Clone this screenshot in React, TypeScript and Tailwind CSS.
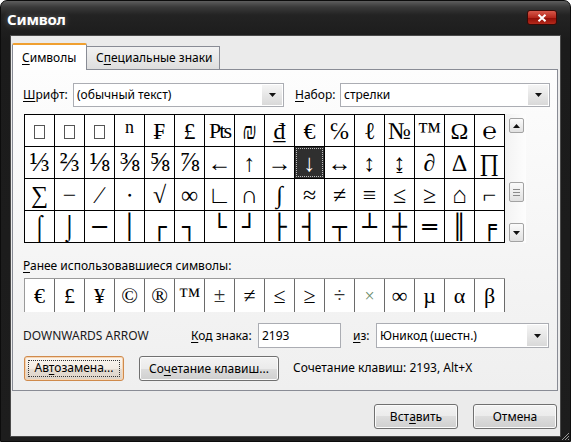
import React from "react";

const U = ({ c }: { c: string }) => (
  <span className="underline decoration-1 underline-offset-[2px]">{c}</span>
);

const rows: string[][] = [
  ["box", "box", "box", "ⁿ", "₣", "£", "Pts", "₪", "₫", "€", "℅", "ℓ", "№", "™", "Ω", "℮"],
  ["⅓", "⅔", "⅛", "⅜", "⅝", "⅞", "←", "↑", "→", "↓", "↔", "↕", "↨", "∂", "∆", "∏"],
  ["∑", "−", "∕", "∙", "√", "∞", "∟", "∩", "∫", "≈", "≠", "≡", "≤", "≥", "⌂", "⌐"],
  ["⌠", "⌡", "─", "│", "┌", "┐", "└", "┘", "├", "┤", "┬", "┴", "┼", "═", "║", "╒"],
];

const recent = ["€", "£", "¥", "©", "®", "™", "±", "≠", "≤", "≥", "÷", "×", "∞", "µ", "α", "β"];

function Cell({ s, sel }: { s: string; sel?: boolean }) {
  if (sel) {
    return (
      <div className="w-[30px] h-[32px] border-r border-b border-black bg-[#2f2f2f] p-[1px]">
        <div className="w-full h-full border border-dotted border-[#bdbdbd] flex items-center justify-center text-white text-[24px] leading-none font-['Liberation_Serif','DejaVu_Serif',serif]">
          {s}
        </div>
      </div>
    );
  }
  const code = s.charCodeAt(0);
  const box = code >= 0x2500 && code < 0x2580;
  const frac = code >= 0x2150 && code < 0x2160;
  return (
    <div className="w-[30px] h-[32px] border-r border-b border-black bg-white flex items-center justify-center text-black leading-none">
      {s === "box" ? (
        <div className="w-[11px] h-[14px] border border-[#555] mt-[3px]" />
      ) : s === "Pts" ? (
        <span className="text-[22px] tracking-[-2px] font-['Liberation_Serif',serif]">Pts</span>
      ) : s === "ⁿ" ? (
        <span className="text-[18px] font-['Liberation_Serif',serif] -mt-[8px]">n</span>
      ) : box ? (
        <span className="text-[24px] leading-none font-['DejaVu_Sans_Mono',monospace]">{s}</span>
      ) : frac ? (
        <span className="text-[27px] font-['Liberation_Serif','DejaVu_Serif',serif]">{s}</span>
      ) : (
        <span className="text-[24px] font-['Liberation_Serif','DejaVu_Serif',serif]">{s}</span>
      )}
    </div>
  );
}

function Tri() {
  return (
    <svg width="7" height="4" viewBox="0 0 7 4">
      <path d="M0 0H7L3.5 4Z" fill="#111" />
    </svg>
  );
}
function TriUp() {
  return (
    <svg width="7" height="4" viewBox="0 0 7 4">
      <path d="M0 4H7L3.5 0Z" fill="#111" />
    </svg>
  );
}

function Select({ w, text }: { w: string; text: string }) {
  return (
    <div className={`${w} h-[24px] border border-[#abadb3] bg-white flex items-stretch`}>
      <div className="flex-1 flex items-center pl-[3px] text-[12px] text-black">{text}</div>
      <div className="w-[20px] my-[1px] mr-[1px] bg-gradient-to-b from-[#f5f5f5] to-[#d9d9d9] flex items-center justify-center">
        <Tri />
      </div>
    </div>
  );
}

function Btn({ children, w, focus }: { children: React.ReactNode; w: string; focus?: boolean }) {
  if (focus) {
    return (
      <div className={`${w} h-[25px] rounded-[3px] border border-[#cf8a4c] bg-[linear-gradient(#fbf6f0_0%,#f2ebe3_50%,#e6ddd3_50%,#ddd3c8_100%)] shadow-[inset_0_0_0_1px_#f7d5b2] p-[3px]`}>
        <div className="w-full h-full border border-dotted border-[#333] flex items-center justify-center text-[12px] text-black">
          {children}
        </div>
      </div>
    );
  }
  return (
    <div className={`${w} h-[25px] rounded-[3px] border border-[#707070] bg-[linear-gradient(#f3f3f3_0%,#ebebeb_50%,#dddddd_50%,#cfcfcf_100%)] shadow-[inset_0_0_0_1px_#fbfbfb] flex items-center justify-center text-[12px] text-black`}>
      {children}
    </div>
  );
}

export default function App() {
  return (
    <div className="w-[571px] h-[442px] bg-white relative overflow-hidden font-['Noto_Sans','Open_Sans',sans-serif]">
      <div className="w-full h-full rounded-t-[7px] bg-[linear-gradient(#5e5e5e_0px,#3a3a3a_6px,#232323_14px,#1b1b1b_40px,#1d1d1d_100%)] border border-[#0c0c0c] flex flex-col">
        {/* title bar */}
        <div className="h-[34px] flex items-center pl-[6px] pr-[13px] shrink-0">
          <div className="text-white text-[15px] font-bold tracking-[-0.2px] [text-shadow:0_0_6px_rgba(255,255,255,0.35)] mt-[3px]">
            Символ
          </div>
          <div className="ml-auto self-start mt-[9px] w-[30px] h-[15px] rounded-[3px] border border-[#3a0a06] bg-[linear-gradient(#d8584a_0%,#b5281d_50%,#920f07_55%,#b52a1c_100%)] flex items-center justify-center">
            <svg width="10" height="8" viewBox="0 0 10 8">
              <path d="M1.5 0.8L8.5 7.2M8.5 0.8L1.5 7.2" stroke="#fff" strokeWidth="2" />
            </svg>
          </div>
        </div>
        {/* body */}
        <div className="flex-1 ml-[9px] mr-[9px] mb-[4px] bg-[#ebebeb] border border-[#4a4a4a] flex flex-col pt-[7px] pl-[1px] pr-[2px]">
          {/* tabs */}
          <div className="flex items-end relative z-10 h-[26px]">
            <div className="w-[75px] h-[27px] -mb-[1px] bg-white border border-b-0 border-[#898c95] border-t-[2px] border-t-[#f0a030] rounded-t-[2px] flex items-center pl-[9px] text-[12px] text-black">
              <U c="С" />имволы
            </div>
            <div className="w-[133px] h-[23px] bg-gradient-to-b from-[#f2f2f2] to-[#dedede] border border-l-0 border-b-0 border-[#898c95] flex items-center pl-[9px] text-[12px] text-black">
              С<U c="п" />ециальные знаки
            </div>
          </div>
          {/* panel */}
          <div className="h-[322px] border border-[#898c95] bg-gradient-to-b from-[#fdfdfd] to-[#efefef] pt-[13px] pl-[10px] flex flex-col text-[12px] text-black">
            <div className="flex items-center h-[24px]">
              <div className="w-[50px]">
                <U c="Ш" />рифт:
              </div>
              <Select w="w-[211px]" text="(обычный текст)" />
              <div className="ml-[11px] w-[45px]">
                <U c="Н" />абор:
              </div>
              <Select w="w-[210px]" text="стрелки" />
            </div>
            {/* grid + scrollbar */}
            <div className="flex mt-[7px] ml-[1px]">
              <div className="border-l border-t border-black grid grid-cols-[repeat(16,30px)]">
                {rows.map((r, ri) =>
                  r.map((s, ci) => <Cell key={ri + "-" + ci} s={s} sel={ri === 1 && ci === 9} />)
                )}
              </div>
              <div className="w-[21px] h-[129px] bg-gradient-to-r from-[#f3f3f3] to-[#fdfdfd] flex flex-col items-end pr-[2px] pt-[4px]">
                <div className="w-[15px] h-[15px] rounded-[2px] border border-[#a3a3a3] bg-gradient-to-b from-[#fbfbfb] to-[#e1e1e1] flex items-center justify-center">
                  <TriUp />
                </div>
                <div className="mt-[49px] w-[15px] h-[20px] rounded-[2px] border border-[#a3a3a3] bg-gradient-to-b from-[#fbfbfb] to-[#e1e1e1] flex flex-col items-center justify-center gap-[2px]">
                  <div className="w-[7px] h-[1px] bg-[#8a8a8a]" />
                  <div className="w-[7px] h-[1px] bg-[#8a8a8a]" />
                  <div className="w-[7px] h-[1px] bg-[#8a8a8a]" />
                </div>
                <div className="mt-[21px] w-[15px] h-[19px] rounded-[2px] border border-[#a3a3a3] bg-gradient-to-b from-[#fbfbfb] to-[#e1e1e1] flex items-center justify-center">
                  <Tri />
                </div>
              </div>
            </div>
            {/* recent */}
            <div className="mt-[14px] h-[17px] leading-[17px]">
              <U c="Р" />анее использовавшиеся символы:
            </div>
            <div className="mt-[4px] ml-[1px] w-[481px] h-[34px] border-l border-t border-[#9a9a9a] bg-white flex">
              {recent.map((s, i) => (
                <div
                  key={i}
                  className={`w-[30px] h-full border-r border-[#6a6a6a] flex items-center justify-center leading-none font-['Liberation_Serif','DejaVu_Serif',serif] ${s === "×" ? "text-[#6a8a6a] text-[18px]" : s === "÷" || s === "±" ? "text-[#333] text-[21px]" : "text-black text-[22px]"}`}
                >
                  {s}
                </div>
              ))}
            </div>
            {/* code row */}
            <div className="mt-[11px] h-[25px] flex items-center">
              <div className="w-[168px] text-[#1a1a1a]">DOWNWARDS ARROW</div>
              <div className="w-[67px]">
                <U c="К" />од знака:
              </div>
              <div className="w-[83px] h-[25px] border border-[#abadb3] bg-white flex items-center pl-[3px]">2193</div>
              <div className="ml-[12px] w-[23px]">
                <U c="и" />з:
              </div>
              <Select w="w-[173px] !h-[25px]" text="Юникод (шестн.)" />
            </div>
            {/* buttons row */}
            <div className="mt-[7px] flex items-center">
              <div className="ml-[1px]">
                <Btn w="w-[100px]" focus>
                  <span>
                    Ав<U c="т" />озамена...
                  </span>
                </Btn>
              </div>
              <div className="ml-[15px] mt-[1px]">
                <Btn w="w-[140px]">
                  <span>
                    Со<U c="ч" />етание клавиш...
                  </span>
                </Btn>
              </div>
              <div className="ml-[14px]">Сочетание клавиш: 2193, Alt+X</div>
            </div>
          </div>
          {/* footer */}
          <div className="mt-[13px] flex justify-end gap-[15px] pr-[1px]">
            <Btn w="w-[84px]">
              <span>
                Вст<U c="а" />вить
              </span>
            </Btn>
            <Btn w="w-[84px]">Отмена</Btn>
          </div>
        </div>
      </div>
      <svg className="absolute right-[1px] bottom-[1px]" width="10" height="10" viewBox="0 0 10 10">
        <path d="M9 2L2 9M9 5L5 9M9 8L8 9" stroke="#9a9a9a" strokeWidth="1" />
      </svg>
    </div>
  );
}
